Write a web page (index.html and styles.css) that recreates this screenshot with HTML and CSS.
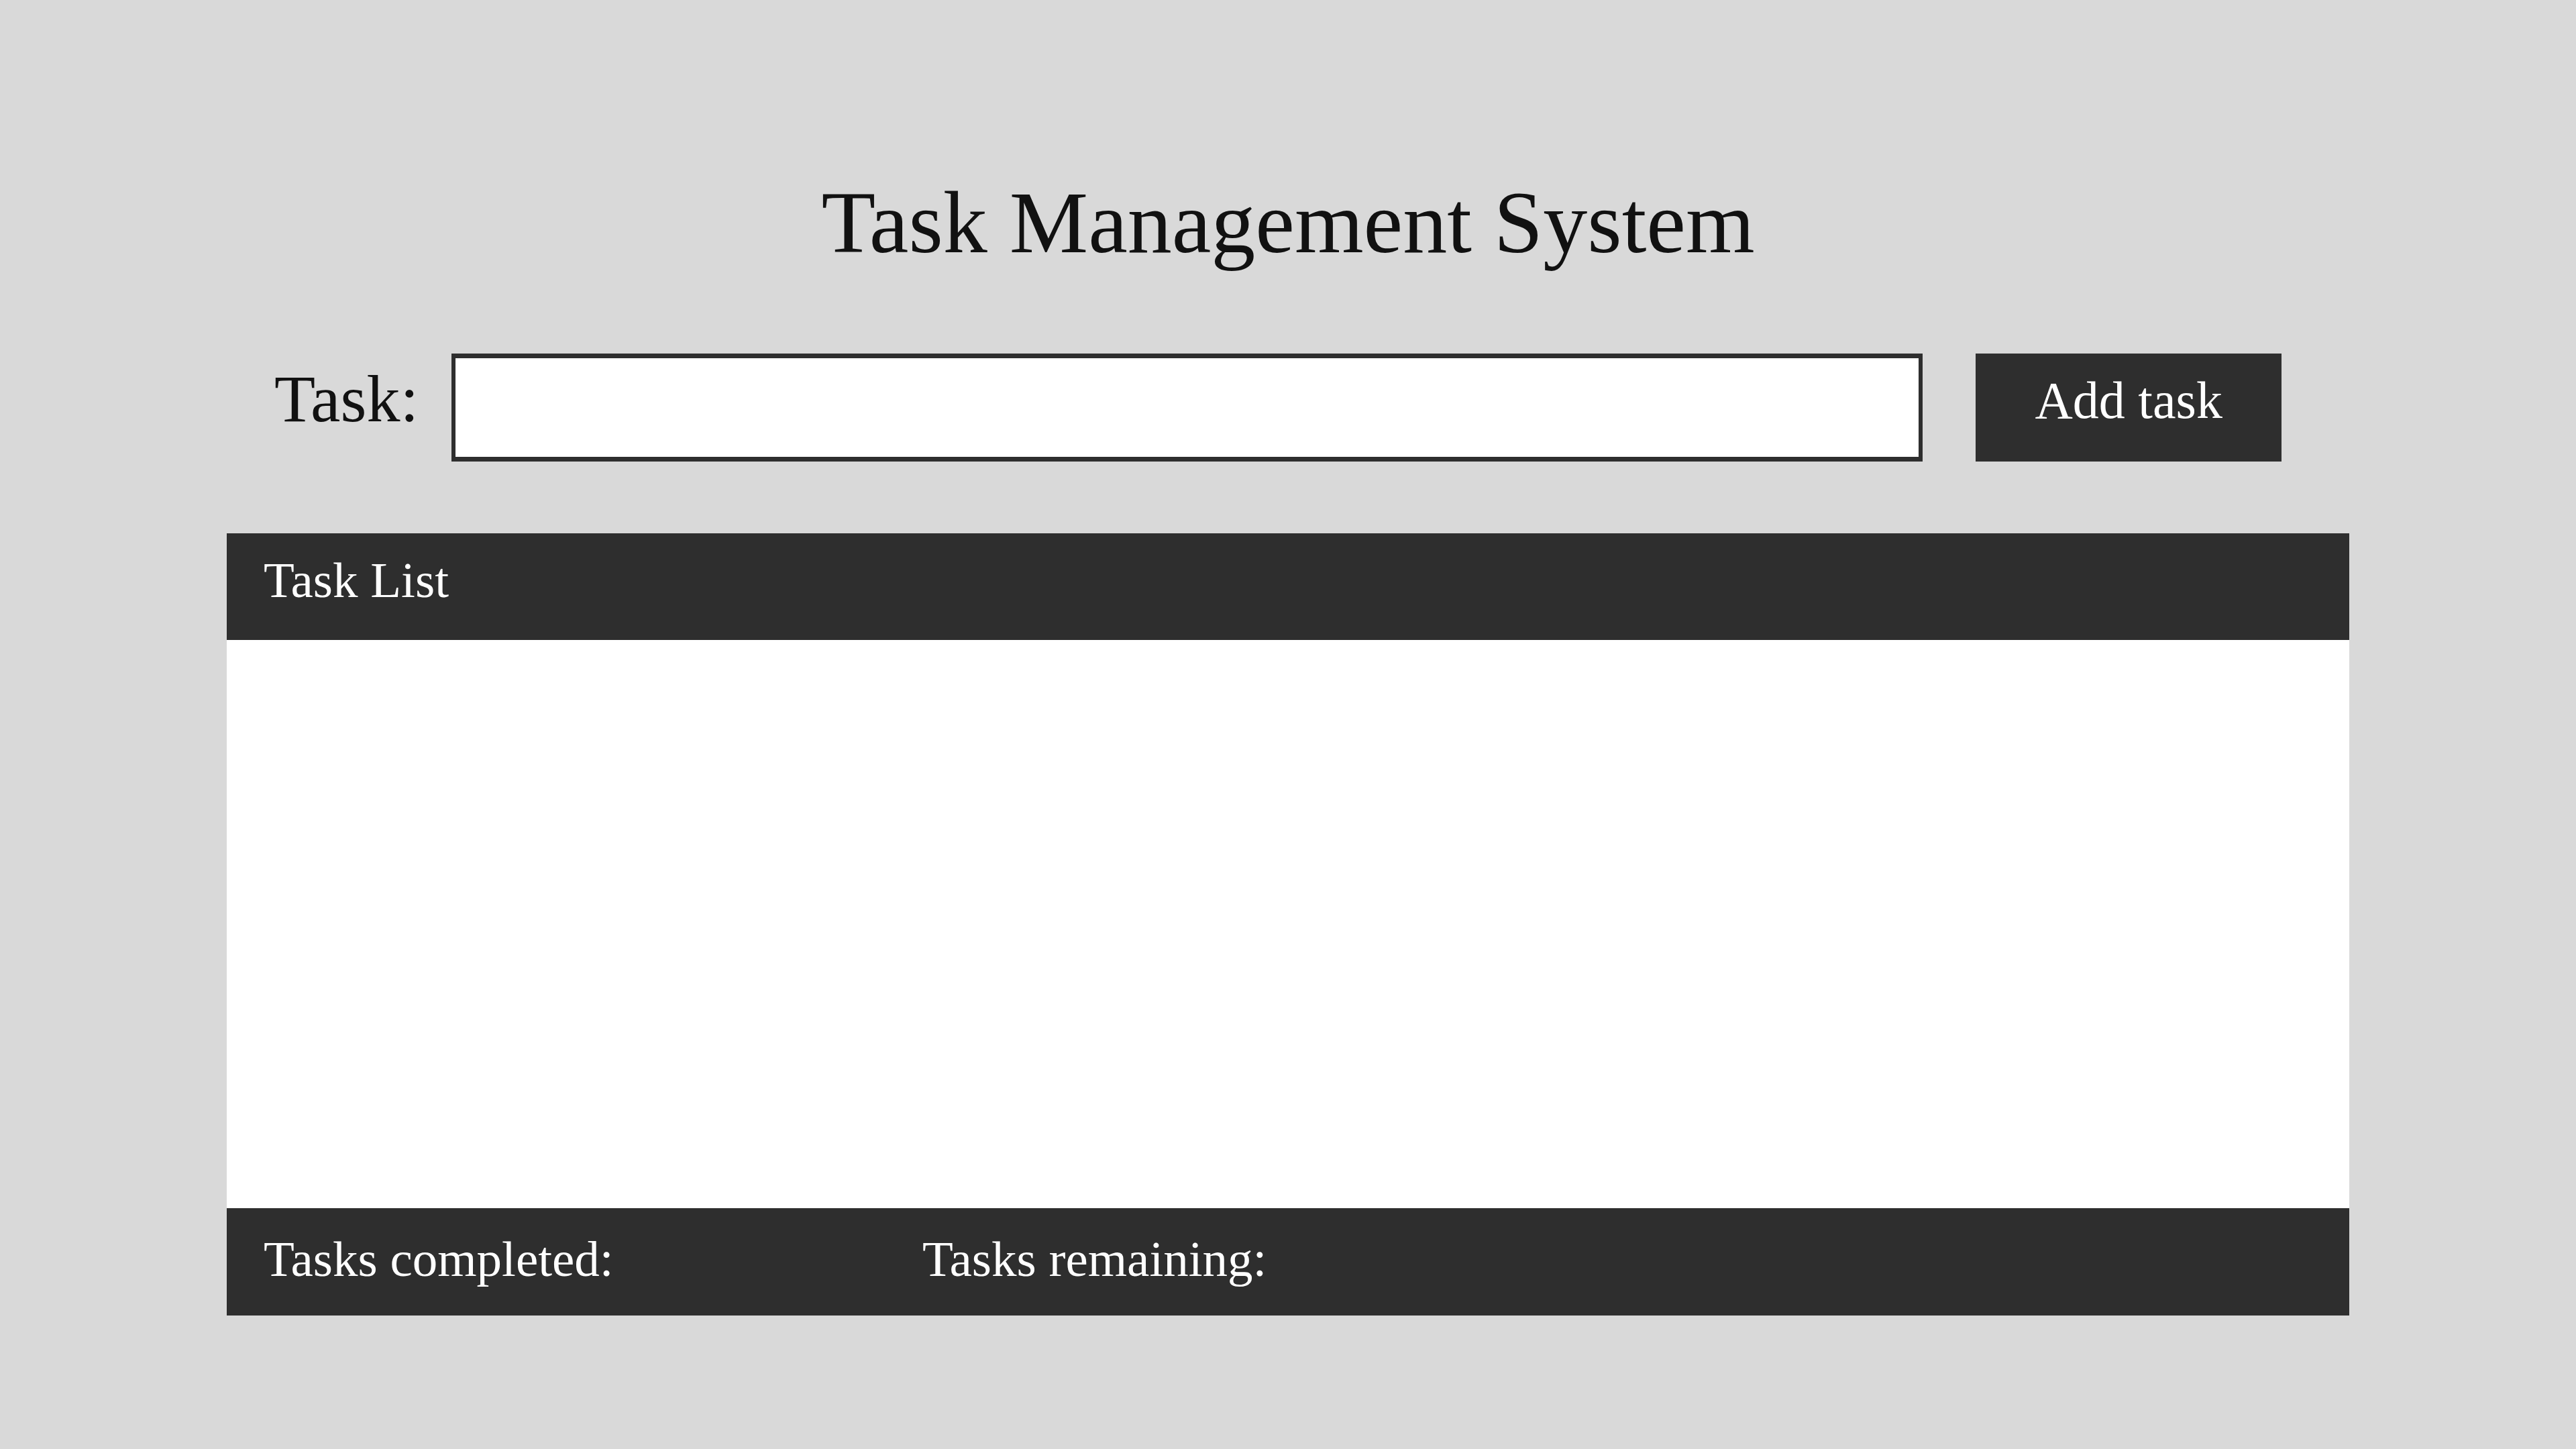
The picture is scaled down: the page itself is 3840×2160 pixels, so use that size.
FILE: index.html
```html
<!DOCTYPE html>
<html lang="en">
<head>
<meta charset="utf-8">
<title>Task Management System</title>
<link rel="stylesheet" href="styles.css">
</head>
<body>
<main class="app">
  <h1 class="title">Task Management System</h1>
  <form class="entry" onsubmit="return false;">
    <label class="entry-label" for="task">Task:</label>
    <input class="entry-input" id="task" type="text">
    <button class="entry-button" type="submit">Add task</button>
  </form>
  <section class="panel">
    <header class="panel-head">Task List</header>
    <div class="panel-body"></div>
    <footer class="panel-foot">
      <span class="stat stat-completed">Tasks completed:</span>
      <span class="stat">Tasks remaining:</span>
    </footer>
  </section>
</main>
</body>
</html>
```

FILE: styles.css
```css
html, body {
  margin: 0;
  padding: 0;
  background: #d9d9d9;
}

body {
  font-family: "Liberation Serif", "Times New Roman", serif;
  color: #111111;
}

.app {
  width: 3164px;
  margin: 0 auto;
  padding-top: 255px;
}

.title {
  margin: 0;
  font-size: 132px;
  font-weight: normal;
  line-height: normal;
  text-align: center;
  color: #111111;
}

.entry {
  display: flex;
  align-items: center;
  margin: 119px 0 0 0;
  padding-left: 71px;
  height: 161px;
}

.entry-label {
  flex: none;
  font-size: 100px;
  line-height: normal;
  padding-bottom: 26px;
  margin-right: 49px;
  color: #111111;
}

.entry-input {
  flex: none;
  box-sizing: border-box;
  width: 2193px;
  height: 161px;
  margin: 0 79px 0 0;
  padding: 0 20px;
  border: 7px solid #2e2e2e;
  border-left-width: 6px;
  border-right-width: 6px;
  background: #ffffff;
  font-family: inherit;
  font-size: 77px;
  outline: none;
}

.entry-button {
  flex: none;
  box-sizing: border-box;
  width: 456px;
  height: 161px;
  margin: 0;
  padding: 25px 0 47px 0;
  border: none;
  background: #2e2e2e;
  color: #ffffff;
  font-family: inherit;
  font-size: 78px;
  line-height: normal;
  text-align: center;
}

.panel {
  margin-top: 107px;
  display: flex;
  flex-direction: column;
}

.panel-head {
  box-sizing: border-box;
  height: 159px;
  padding: 27px 0 0 55px;
  background: #2e2e2e;
  color: #ffffff;
  font-size: 75px;
  line-height: normal;
}

.panel-body {
  height: 847px;
  background: #ffffff;
}

.panel-foot {
  box-sizing: border-box;
  height: 160px;
  display: flex;
  padding: 33px 0 0 55px;
  background: #2e2e2e;
  color: #ffffff;
  font-size: 75px;
  line-height: normal;
}

.stat-completed {
  width: 982px;
  flex: none;
}
```
